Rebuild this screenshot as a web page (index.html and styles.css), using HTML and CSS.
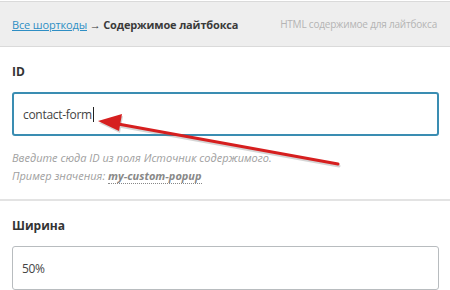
FILE: index.html
```html
<!DOCTYPE html>
<html lang="ru">
<head>
  <meta charset="UTF-8">
  <title>Содержимое лайтбокса</title>
  <link rel="stylesheet" href="styles.css">
</head>
<body>
  <div class="page">
    <div class="header">
      <div class="crumbs">
        <a href="#" class="crumb-link">Все шорткоды</a> → <strong>Содержимое лайтбокса</strong>
      </div>
      <div class="header-note">HTML содержимое для лайтбокса</div>
    </div>

    <div class="section section-first">
      <div class="label">ID</div>
      <div class="field field-focus">contact-form<span class="caret"></span></div>
      <div class="help">
        <p>Введите сюда ID из поля Источник содержимого.</p>
        <p>Пример значения: <b class="sample">my-custom-popup</b></p>
      </div>
    </div>

    <div class="section">
      <div class="label">Ширина</div>
      <div class="field">50%</div>
    </div>

    <!-- red arrow drawn over the screenshot -->
    <svg class="arrow" width="450" height="290" viewBox="0 0 450 290">
      <g opacity="0.3" transform="translate(1,2)">
        <line x1="118" y1="124" x2="338" y2="164" stroke="#777" stroke-width="3" stroke-linecap="round"/>
        <polygon points="98,121 122,114 119,131" fill="#777"/>
      </g>
      <line x1="118" y1="124" x2="338" y2="164" stroke="#d61f1f" stroke-width="3" stroke-linecap="round"/>
      <polygon points="98,121 122,114 119,131" fill="#d61f1f"/>
    </svg>
  </div>
</body>
</html>
```

FILE: styles.css
```css
body {
  margin: 0;
  font-family: "Open Sans", Arial, sans-serif;
  font-size: 12px;
  color: #333;
  background: #fff;
}
.page {
  position: relative;
  width: 450px;
  height: 290px;
  overflow: hidden;
  padding-top: 1px;
  box-sizing: border-box;
}
.header {
  height: 44px;
  display: flex;
  align-items: center;
  justify-content: space-between;
  padding: 0 13px 0 12px;
  background: #eeeeee;
  border-top: 1px solid #dadada;
  border-bottom: 1px solid #dadada;
  white-space: nowrap;
}
.crumbs {
  color: #333;
  font-size: 11px;
  letter-spacing: -0.15px;
}
.crumb-link {
  color: #2e8ec4;
  text-decoration: underline;
}
.crumbs strong {
  font-weight: bold;
  color: #3a3a3a;
}
.header-note {
  color: #b4b4b4;
  font-size: 10px;
  letter-spacing: -0.2px;
}
.section {
  padding: 16px 11px 0 12px;
}
.section-first {
  padding-bottom: 14px;
  border-bottom: 2px solid #e3e3e3;
}
.label {
  font-weight: bold;
  line-height: 18px;
  color: #333;
  margin-bottom: 11px;
}
.field {
  height: 44px;
  box-sizing: border-box;
  display: flex;
  align-items: center;
  padding: 0 9px;
  border: 1px solid #b8bcbf;
  border-radius: 3px;
  color: #444;
  letter-spacing: -0.3px;
}
.field-focus {
  border: 2px solid #3a8db2;
}
.caret {
  display: inline-block;
  width: 1px;
  height: 15px;
  background: #222;
  margin-left: 1px;
}
.help {
  margin-top: 13px;
  color: #a0a0a0;
  font-size: 11px;
  font-style: italic;
}
.help p {
  margin: 0;
  line-height: 18px;
}
.sample {
  color: #888;
  border-bottom: 1px dotted #888;
}
.arrow {
  position: absolute;
  left: 0;
  top: 0;
  pointer-events: none;
}
```
